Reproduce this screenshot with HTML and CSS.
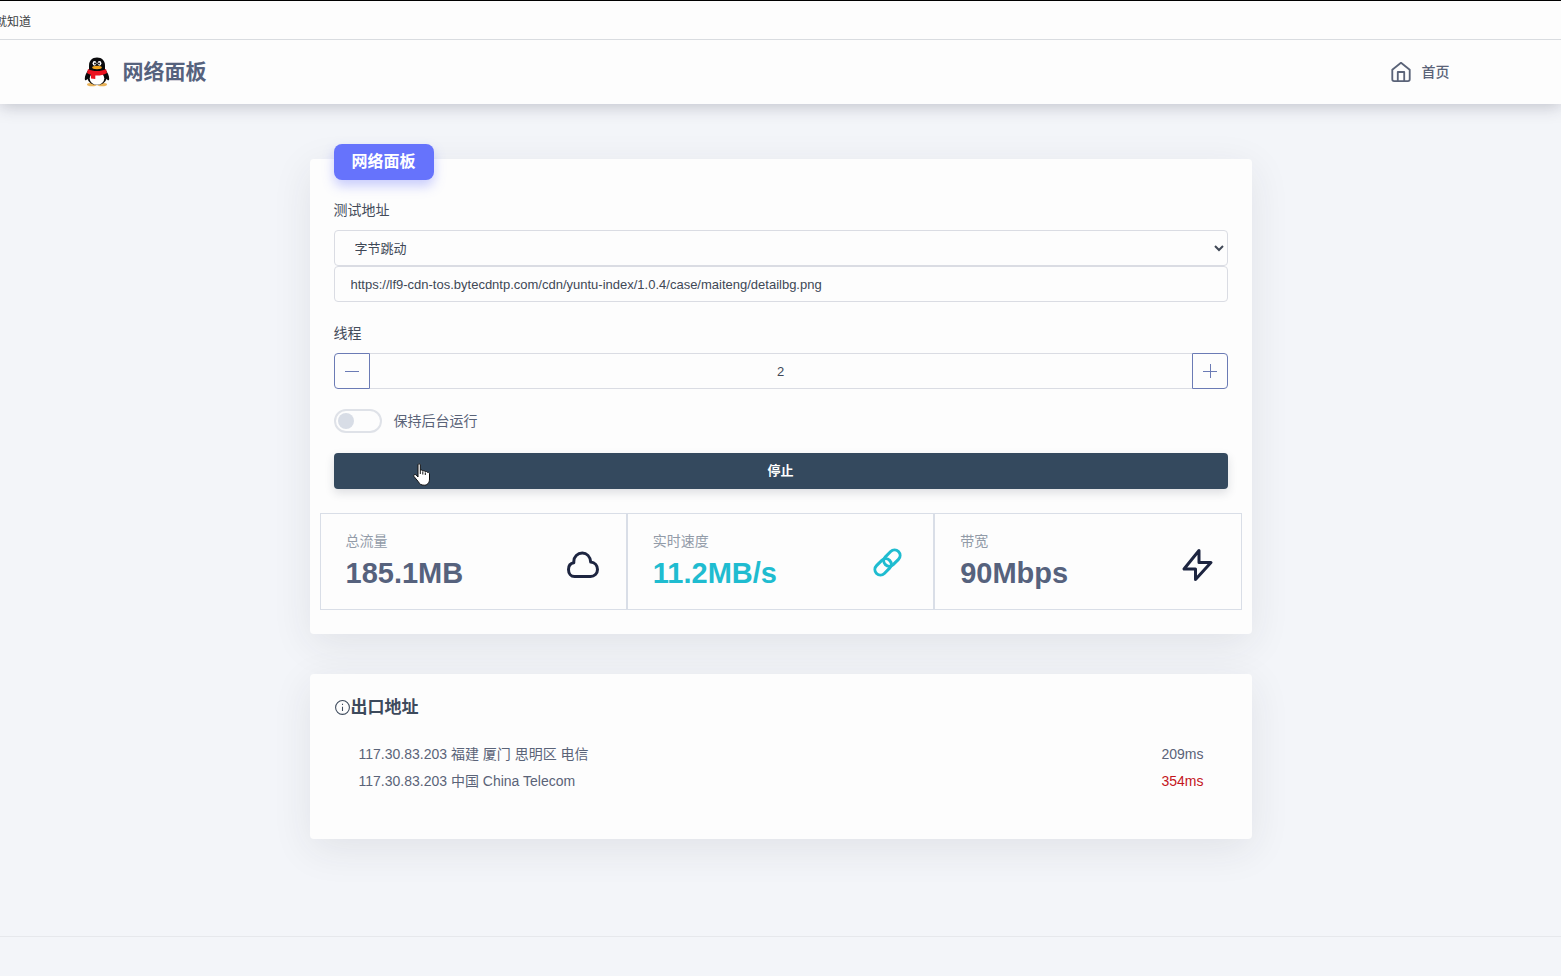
FILE: index.html
```html
<!DOCTYPE html>
<html lang="zh-CN">
<head>
<meta charset="utf-8">
<meta name="viewport" content="width=device-width, initial-scale=1">
<title>网络面板</title>
<link rel="stylesheet" href="styles.css">
</head>
<body>
<div class="bookmarks"><a href="#">就知道</a></div>
<header class="navbar">
  <div class="navbar-inner">
    <a class="brand" href="#">
      <svg class="brand-logo" viewBox="0 0 26 30" aria-hidden="true">
        <ellipse cx="8" cy="27.500" rx="5" ry="1.800" fill="#e9b35a"/>
        <ellipse cx="18" cy="27.500" rx="5" ry="1.800" fill="#e9b35a"/>
        <path d="M5 12C2.500 15 .7 19 .8 22c.2 2 1.500 1.500 2.700-.2C4.500 25.500 8 28 13 28s8.500-2.500 9.500-6.200c1.200 1.700 2.500 2.200 2.700.2.100-3-1.700-7-4.200-10z" fill="#0a0a0c"/>
        <path d="M13 .5C8 .5 5 4 5 8.500V15h16V8.500C21 4 18 .5 13 .5z" fill="#0a0a0c"/>
        <ellipse cx="13" cy="21.500" rx="7.300" ry="6.300" fill="#fff"/>
        <ellipse cx="10.500" cy="6.300" rx="1.900" ry="2.400" fill="#fff"/>
        <ellipse cx="15.500" cy="6.300" rx="1.900" ry="2.400" fill="#fff"/>
        <circle cx="11" cy="6.500" r=".9"/><circle cx="15" cy="6.500" r=".9"/>
        <ellipse cx="13" cy="10.500" rx="4.800" ry="1.700" fill="#f2a51b"/>
        <path d="M4 12c5 2.800 13 2.800 18 0l1 4c-4 2.300-8 2.800-11.700 2.500V22l-4.300-.5v-3.700c-1.500-.5-3-1-4-1.800z" fill="#ec1320"/>
      </svg>
      <span>网络面板</span>
    </a>
    <nav>
      <a class="nav-link" href="#">
        <svg class="nav-icon" viewBox="0 0 24 24" aria-hidden="true"><path d="M2.500 9.500 12 2l9.500 7.500V20a2 2 0 0 1-2 2h-15a2 2 0 0 1-2-2z"/><path d="M8.500 22V12h7v10"/></svg>
        <span>首页</span>
      </a>
    </nav>
  </div>
</header>
<main class="content">
  <section class="card panel">
    <h1 class="ribbon">网络面板</h1>
    <label class="label" for="target">测试地址</label>
    <select class="field select" id="target"><option>字节跳动</option></select>
    <input class="field" type="text" aria-label="地址" value="https://lf9-cdn-tos.bytecdntp.com/cdn/yuntu-index/1.0.4/case/maiteng/detailbg.png">
    <label class="label threads-label" for="threads">线程</label>
    <div class="stepper">
      <button class="step minus" type="button" aria-label="减少"><svg viewBox="0 0 14 14"><path d="M0 7.500h14"/></svg></button>
      <input class="field count" id="threads" type="text" value="2">
      <button class="step plus" type="button" aria-label="增加"><svg viewBox="0 0 14 14"><path d="M0 7.500h14M7.500 0v14"/></svg></button>
    </div>
    <div class="switch-row">
      <input class="switch" id="background" type="checkbox">
      <label for="background">保持后台运行</label>
    </div>
    <button class="stop" type="button">停止
      <svg class="pointer" viewBox="0 0 17 23" aria-hidden="true"><path d="M5 1.800C5 .5 7.300.5 7.300 1.800V7.500c.5-.8 2.300-.6 2.500.6.500-.7 2.300-.5 2.500.7.600-.6 2.200-.3 2.300.7.700-.4 1.900 0 1.900 1.200V16c0 4-2.300 6.200-5.300 6.200-3.200 0-4.700-1.200-6-3.700L1 13.500C.2 11.700 2 10.800 3.200 12L5 14z"/><path class="knuckles" d="M7.300 7.500V11M9.800 8.500V11.500M12.300 9.500V12"/></svg>
    </button>
    <div class="stats">
      <div class="stat">
        <div><div class="stat-name">总流量</div><div class="stat-value">185.1MB</div></div>
        <svg class="stat-icon" viewBox="0 0 34 34" aria-hidden="true"><path d="M8.500 28.500h16a7 7 0 0 0 7-7c0-3.800-2.600-7-6.800-7.500C24.200 8.500 20.700 5 16.300 5c-4.800 0-8.500 3.700-8.500 8.500v1.200C4.500 15.200 2.500 18 2.500 21.500c0 4 2.500 7 6 7z"/></svg>
      </div>
      <div class="stat speed">
        <div><div class="stat-name">实时速度</div><div class="stat-value">11.2MB/s</div></div>
        <svg class="stat-icon" viewBox="0 0 34 34" aria-hidden="true"><g transform="rotate(-45 14.500 14.500)"><rect x="-1" y="9" width="18.500" height="11" rx="5.500"/><rect x="11.500" y="9" width="18.500" height="11" rx="5.500"/></g></svg>
      </div>
      <div class="stat">
        <div><div class="stat-name">带宽</div><div class="stat-value">90Mbps</div></div>
        <svg class="stat-icon" viewBox="0 0 34 34" aria-hidden="true"><path d="M18 2.500 3 21h11.500v10.500L30 14.500H18z"/></svg>
      </div>
    </div>
  </section>
  <section class="card exits">
    <h2 class="exits-title"><svg viewBox="0 0 16 16" aria-hidden="true"><circle cx="8" cy="7" r="6.500"/><path d="M8 6.300v4M8 3.500v1.200"/></svg>出口地址</h2>
    <ul class="exit-list">
      <li><span>117.30.83.203 福建 厦门 思明区 电信</span><span>209ms</span></li>
      <li><span>117.30.83.203 中国 China Telecom</span><span class="slow">354ms</span></li>
    </ul>
  </section>
</main>
<footer class="footer"></footer>
</body>
</html>
```
FILE: styles.css
```css
* { box-sizing: border-box; }

body {
  margin: 0;
  min-height: 100vh;
  display: flex;
  flex-direction: column;
  background: #f3f5f9;
  color: #5a6378;
  font: 14px/20px "Liberation Sans", "Noto Sans CJK SC", sans-serif;
}

a { color: inherit; text-decoration: none; }
button, input, select { font: inherit; margin: 0; }

.bookmarks {
  position: relative;
  z-index: 1;
  height: 40px;
  padding-top: 11px;
  overflow: hidden;
  border-top: 1px solid #000;
  border-bottom: 1px solid #d9dce0;
  background: #fdfdfd;
  color: #3c4043;
  font-size: 12px;
  text-indent: -5px;
}

.navbar {
  background: #fdfdfd;
  box-shadow: 0 2px 16px rgba(40, 40, 60, 0.26);
}

.navbar-inner {
  display: flex;
  align-items: center;
  justify-content: space-between;
  max-width: 1394px;
  height: 64px;
  margin: 0 auto;
  padding-right: 28px;
}

.brand {
  display: flex;
  align-items: center;
  gap: 13px;
  color: #56627d;
  font-size: 21px;
  font-weight: 700;
}

.brand-logo { width: 26px; height: 30px; }

.nav-link {
  display: flex;
  align-items: center;
  gap: 10px;
  font-weight: 500;
}

.nav-icon {
  width: 22px;
  height: 22px;
  fill: none;
  stroke: currentColor;
  stroke-width: 2;
  stroke-linejoin: round;
}

.content {
  width: 100%;
  max-width: 942px;
  margin: 0 auto;
  padding-top: 55px;
  flex: 1;
}

.card {
  background: #fdfdfd;
  border-radius: 4px;
  box-shadow: 0 10px 40px rgba(40, 45, 55, 0.09);
}

.panel {
  display: flex;
  flex-direction: column;
  padding: 0 24px 24px;
  margin-bottom: 40px;
}

.ribbon {
  align-self: flex-start;
  margin: -15px 0 20px;
  padding: 0 18px;
  border-radius: 8px;
  background: #6673fc;
  box-shadow: 0 6px 12px rgba(102, 115, 252, 0.35);
  color: #fff;
  font-size: 16px;
  line-height: 36px;
}

.label { margin-bottom: 10px; color: #444c5a; }
.threads-label { margin-top: 21px; }

.field {
  width: 100%;
  height: 36px;
  padding: 0 16px;
  border: 1px solid #dadce3;
  border-radius: 4px;
  background: #fdfdfd;
  color: #404856;
  font-size: 13px;
}

.stepper { display: flex; }

.count {
  flex: 1;
  border-width: 1px 0;
  border-radius: 0;
  text-align: center;
}

.step {
  display: grid;
  place-items: center;
  width: 36px;
  height: 36px;
  padding: 0;
  border: 1px solid #6b7bb5;
  background: #fdfdfd;
}

.step svg { width: 14px; height: 14px; stroke: #6b7bb5; }
.minus { border-radius: 4px 0 0 4px; }
.plus { border-radius: 0 4px 4px 0; }

.switch-row {
  display: flex;
  align-items: center;
  gap: 12px;
  margin: 20px 0;
}

.switch {
  appearance: none;
  width: 48px;
  height: 24px;
  padding: 2px;
  border: 2px solid #dfe2e8;
  border-radius: 12px;
}

.switch::before {
  content: "";
  display: block;
  width: 16px;
  height: 16px;
  border-radius: 50%;
  background: #d8dde6;
}

.stop {
  position: relative;
  height: 36px;
  border: 0;
  border-radius: 4px;
  background: #34495e;
  box-shadow: 0 4px 10px rgba(40, 50, 70, 0.15);
  color: #fff;
  font-size: 13px;
  font-weight: 700;
}

.pointer {
  position: absolute;
  left: 79px;
  top: 10px;
  width: 17px;
  height: 23px;
  fill: #fff;
  stroke: #111;
  stroke-width: 1;
}

.pointer .knuckles { fill: none; }

.stats {
  display: grid;
  grid-template-columns: repeat(3, 1fr);
  margin: 24px -14px 0;
}

.stat {
  display: flex;
  align-items: center;
  justify-content: space-between;
  height: 97px;
  padding: 2px 26px 0 25px;
  border: 1px solid #d9dee7;
}

.stat-name { color: #929ba8; }
.stat-value { color: #56627d; font-size: 29px; line-height: 44px; font-weight: 700; }
.speed .stat-value { color: #1fbcd0; }

.stat-icon {
  width: 34px;
  height: 34px;
  margin-top: 4px;
  fill: none;
  stroke: #1d2540;
  stroke-width: 3;
  stroke-linejoin: round;
}

.speed .stat-icon { stroke: #1fbcd0; }

.exits { padding: 21px 24px 44px; }

.exits-title {
  display: flex;
  align-items: center;
  margin: 0 0 20px;
  color: #3d4a5c;
  font-size: 17px;
  line-height: 26px;
}

.exits-title svg {
  width: 17px;
  height: 17px;
  fill: none;
  stroke: currentColor;
}

.exit-list { margin: 0; padding: 0 24px 0 25px; list-style: none; }

.exit-list li {
  display: flex;
  justify-content: space-between;
  line-height: 27px;
}

.slow { color: #c4161c; }

.footer { height: 40px; border-top: 1px solid #e6e8ec; }
```
